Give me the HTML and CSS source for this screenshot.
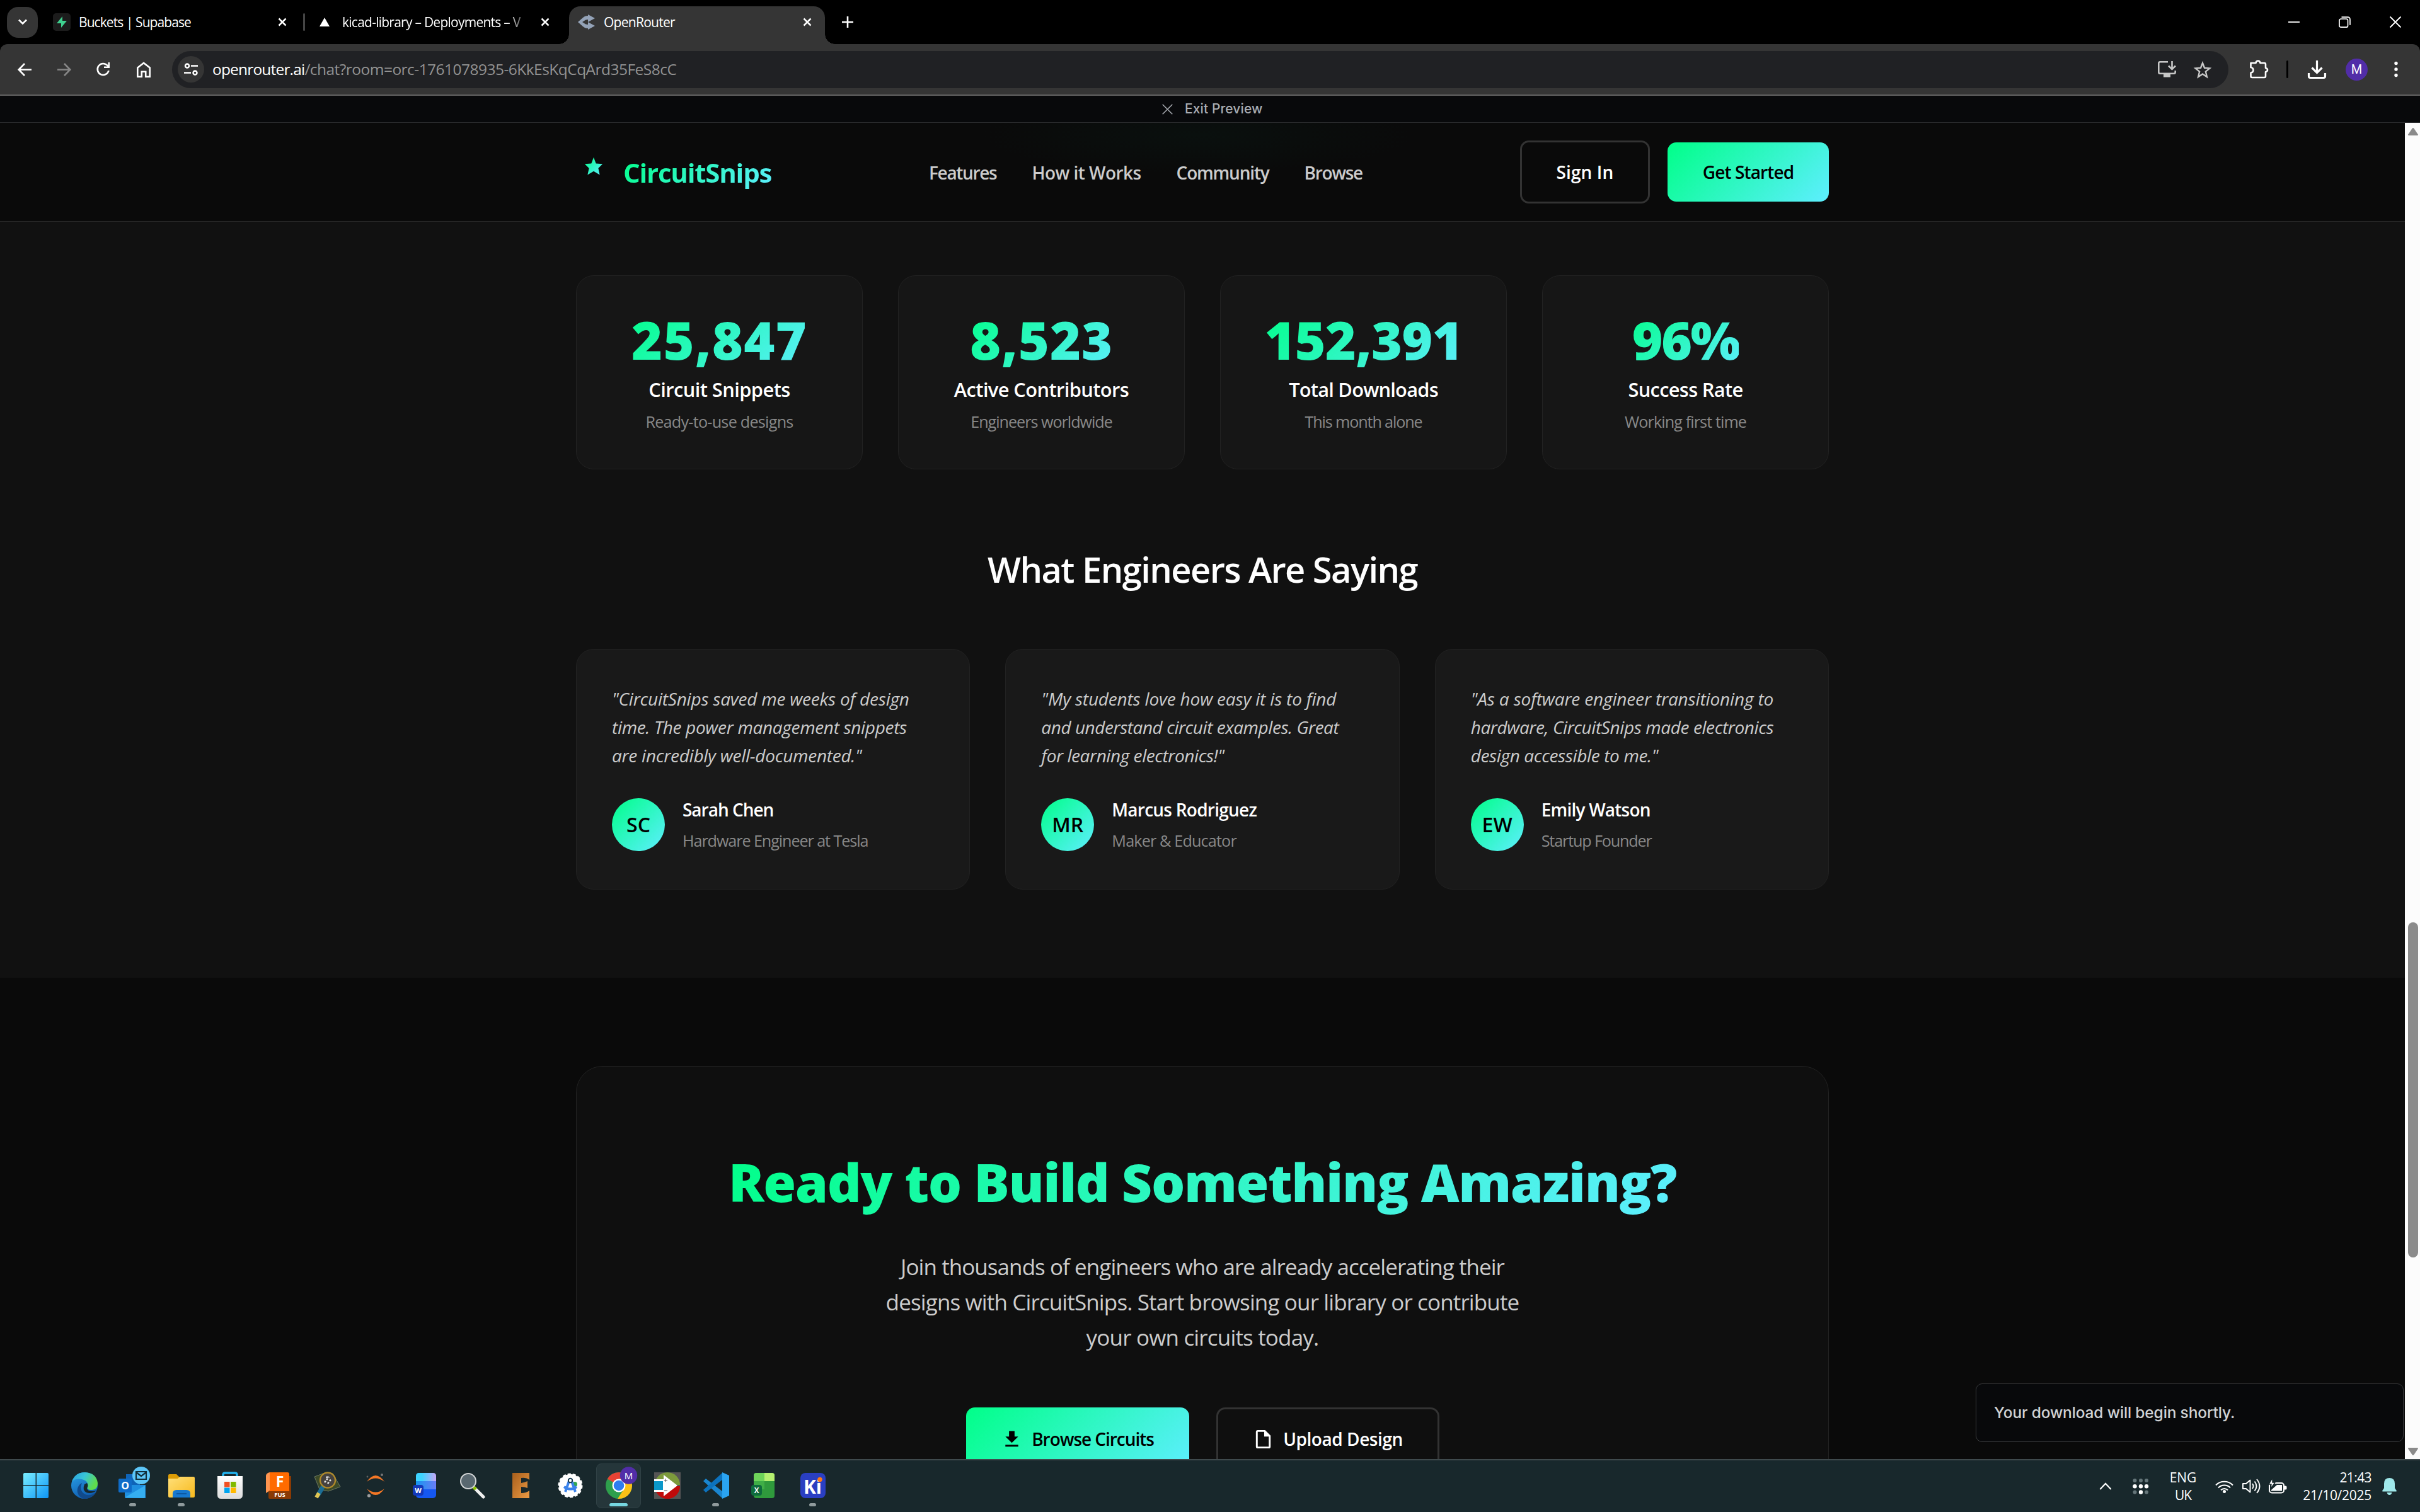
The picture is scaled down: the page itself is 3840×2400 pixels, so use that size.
FILE: index.html
```html
<!DOCTYPE html>
<html lang="en">
<head>
<meta charset="utf-8">
<title>OpenRouter</title>
<link rel="stylesheet" href="styles.css">
</head>
<body>
<svg width="0" height="0" class="defs" aria-hidden="true">
  <defs>
    <linearGradient id="brand" x1="0" y1="0" x2="1" y2="1"><stop offset="0" stop-color="#00ff88"/><stop offset="1" stop-color="#5eeeff"/></linearGradient>
    <linearGradient id="win" gradientUnits="userSpaceOnUse" x1="0" y1="0" x2="42" y2="42"><stop offset="0" stop-color="#7cf0ff"/><stop offset="1" stop-color="#0b93f6"/></linearGradient>
    <linearGradient id="edgeA" x1="0" y1="0" x2="1" y2="0.4"><stop offset="0" stop-color="#2a9fe0"/><stop offset=".5" stop-color="#38c5d8"/><stop offset="1" stop-color="#5fdc4d"/></linearGradient>
    <linearGradient id="edgeB" x1="0" y1="0" x2="0.5" y2="1"><stop offset="0" stop-color="#2aa3e8"/><stop offset="1" stop-color="#0f5cb0"/></linearGradient>
    <linearGradient id="folder" x1="0" y1="0" x2="1" y2="1"><stop offset="0" stop-color="#ffe07a"/><stop offset="1" stop-color="#f8b91c"/></linearGradient>
    <linearGradient id="wordA" x1="0" y1="0" x2="1" y2="0"><stop offset=".3" stop-color="#3dd4ff"/><stop offset="1" stop-color="#c6a5f5"/></linearGradient>
    <linearGradient id="wordB" x1="0" y1="0" x2="1" y2="0"><stop offset="0" stop-color="#1696f0"/><stop offset="1" stop-color="#6a7df5"/></linearGradient>
    <linearGradient id="bronze" x1="0" y1="0" x2="1" y2="1"><stop offset="0" stop-color="#a85f1c"/><stop offset="1" stop-color="#eb9a44"/></linearGradient>
    <linearGradient id="bag" x1="0" y1="0" x2="0" y2="1"><stop offset="0" stop-color="#ffffff"/><stop offset="1" stop-color="#dcdcdc"/></linearGradient>
  </defs>
</svg>

<header class="tabstrip">
  <div class="tab-search"><svg width="16" height="10" viewBox="0 0 16 10"><path d="M2 1.5l6 6 6-6" fill="none" stroke="#fff" stroke-width="2.6"/></svg></div>
  <div class="tab tab-one">
    <span class="fav-supabase"><svg width="20" height="20" viewBox="0 0 20 20"><path d="M11 1L2 12h7v7l9-11h-7z" fill="#3ecf8e"/></svg></span>
    <span class="tab-title t-supabase">Buckets | Supabase</span>
    <svg class="close" width="14" height="14" viewBox="0 0 14 14"><path d="M1.5 1.5l11 11M12.500 1.500l-11 11" stroke="#fff" stroke-width="2.5"/></svg>
  </div>
  <div class="tab-sep"></div>
  <div class="tab tab-two">
    <svg class="fav" width="16" height="14" viewBox="0 0 16 14"><path d="M8 0l8 14H0z" fill="#fff"/></svg>
    <span class="tab-title t-vercel">kicad-library – Deployments – V</span>
    <svg class="close" width="14" height="14" viewBox="0 0 14 14"><path d="M1.5 1.5l11 11M12.500 1.500l-11 11" stroke="#fff" stroke-width="2.5"/></svg>
  </div>
  <div class="tab tab-active">
    <svg class="fav" width="28" height="24" viewBox="0 0 28 24"><path d="M0 12L8 5q3-3 8-3V0l11 6-11 6V8q-4 0-6 2l-3 2 3 2q2 2 6 2v-4l11 6-11 6v-2q-5 0-8-3z" fill="#94a3b8"/></svg>
    <span class="tab-title t-router">OpenRouter</span>
    <svg class="close" width="14" height="14" viewBox="0 0 14 14"><path d="M1.5 1.5l11 11M12.500 1.500l-11 11" stroke="#fff" stroke-width="2.5"/></svg>
  </div>
  <svg class="new-tab" width="18" height="18" viewBox="0 0 18 18"><path d="M9 0v18M0 9h18" stroke="#fff" stroke-width="2.6"/></svg>
  <div class="window-controls">
    <svg width="18" height="18" viewBox="0 0 18 18"><path d="M0 9h18" stroke="#fff" stroke-width="1.8"/></svg>
    <svg width="19" height="18" viewBox="0 0 19 18"><rect x="1" y="4" width="13.500" height="13.200" rx="2.500" fill="none" stroke="#fff" stroke-width="1.700"/><path d="M4.500 1.200h9.500q4 0 4 4v8.500" fill="none" stroke="#fff" stroke-width="1.700"/></svg>
    <svg width="18" height="18" viewBox="0 0 18 18"><path d="M.5.5l17 17M17.500.5l-17 17" stroke="#fff" stroke-width="1.800"/></svg>
  </div>
</header>

<div class="toolbar-wrap">
  <div class="toolbar">
    <svg class="ic-back" width="22" height="21" viewBox="0 0 22 21"><path d="M22 10.500H2M11 1L1.700 10.500 11 20" fill="none" stroke="#fff" stroke-width="2.600"/></svg>
    <svg class="ic-forward" width="22" height="21" viewBox="0 0 22 21"><path d="M0 10.500h20M11 1l9.300 9.500L11 20" fill="none" stroke="#868686" stroke-width="2.600"/></svg>
    <svg class="ic-reload" width="22" height="22" viewBox="0 0 22 22"><path d="M19.500 13A9 9 0 1 1 17.500 5l2 2.500" fill="none" stroke="#fff" stroke-width="2.600"/><path d="M21 0v9h-9V6.500h6.500V0z" fill="#fff"/></svg>
    <svg class="ic-home" width="22" height="25" viewBox="0 0 22 25"><path d="M1.300 9.500L11 2l9.700 7.500v14.200h-6.500v-8H7.800v8H1.300z" fill="none" stroke="#fff" stroke-width="2.600"/></svg>
    <div class="omnibox">
      <span class="site-info"><svg width="22" height="20" viewBox="0 0 22 20"><g fill="none" stroke="#fff" stroke-width="2.500"><circle cx="5" cy="4.500" r="3"/><path d="M11 4.500h11M0 15.500h11"/><circle cx="17.500" cy="15.500" r="3"/></g></svg></span>
      <span class="url"><span class="host">openrouter.ai</span><span class="path">/chat?room=orc-1761078935-6KkEsKqCqArd35FeS8cC</span></span>
      <svg class="ic-install" width="29" height="26" viewBox="0 0 29 26"><path d="M16 1.300H3.500q-2.200 0-2.200 2.200v14q0 2.200 2.200 2.200h22q2.200 0 2.200-2.200V15" fill="none" stroke="#c7c7c7" stroke-width="2.600"/><path d="M9 20h11v5.500H9z" fill="#c7c7c7"/><path d="M22.500 0v12M17 7.500l5.500 5.500L28 7.500" fill="none" stroke="#c7c7c7" stroke-width="2.600"/></svg>
      <svg class="ic-star" width="28" height="27" viewBox="0 0 28 27"><path d="M14 3l3 7.800 8.300.6-6.400 5.300 2 8.300-6.900-4.500L7.100 25l2-8.300-6.400-5.300 8.300-.6z" fill="none" stroke="#c7c7c7" stroke-width="2.400"/></svg>
    </div>
    <svg class="ic-puzzle" width="29" height="30" viewBox="0 0 29 30"><path d="M1.500 5h8q.5-3.500 3.500-3.500T16.500 5H23q2 0 2 2v6q3 .5 3 3t-3 3v7q0 2-2 2H3.500q-2 0-2-2v-5.500q4-.5 4-4.200t-4-4.300z" fill="none" stroke="#fff" stroke-width="2.600" stroke-linejoin="round"/></svg>
    <span class="bar-sep"></span>
    <svg class="ic-download" width="29" height="29" viewBox="0 0 29 29"><path d="M14.500 0v19M6.500 11.500l8 8 8-8M1.500 20v5q0 2.500 2.500 2.500h21q2.500 0 2.500-2.500v-5" fill="none" stroke="#fff" stroke-width="3.200"/></svg>
    <span class="profile">M</span>
    <svg class="ic-more" width="6" height="26" viewBox="0 0 6 26"><g fill="#fff"><circle cx="3" cy="3.500" r="2.700"/><circle cx="3" cy="13" r="2.700"/><circle cx="3" cy="22.500" r="2.700"/></g></svg>
  </div>
</div>

<div class="preview-bar">
  <svg width="17" height="17" viewBox="0 0 17 17"><path d="M.7.7l15.600 15.600M16.300.7L.7 16.300" stroke="#a9adb3" stroke-width="1.500"/></svg>
  <span class="t-exit">Exit Preview</span>
</div>

<div class="viewport">
  <main class="page">
    <nav class="nav">
      <div class="logo">
        <svg width="34" height="34" viewBox="0 0 24 24"><path fill="url(#brand)" d="M12 2l2.600 6.800L22 9.270l-4.800 4.800L18.800 21.500 12 17.500l-6.800 4 1.600-7.430L2 9.270l7.400-.47z"/></svg>
        <span class="logo-text t-logo">CircuitSnips</span>
      </div>
      <div class="links">
        <a class="t-features">Features</a><a class="t-how">How it Works</a><a class="t-community">Community</a><a class="t-browse">Browse</a>
      </div>
      <div class="nav-actions">
        <a class="btn btn-outline sign-in"><span class="t-signin">Sign In</span></a>
        <a class="btn btn-primary get-started"><span class="t-start">Get Started</span></a>
      </div>
    </nav>

    <section class="community">
      <div class="stats">
        <article class="stat"><div class="num"><span class="t-n1">25,847</span></div><div class="label"><span class="t-l1">Circuit Snippets</span></div><div class="sub"><span class="t-s1">Ready-to-use designs</span></div></article>
        <article class="stat"><div class="num"><span class="t-n2">8,523</span></div><div class="label"><span class="t-l2">Active Contributors</span></div><div class="sub"><span class="t-s2">Engineers worldwide</span></div></article>
        <article class="stat"><div class="num"><span class="t-n3">152,391</span></div><div class="label"><span class="t-l3">Total Downloads</span></div><div class="sub"><span class="t-s3">This month alone</span></div></article>
        <article class="stat"><div class="num"><span class="t-n4">96%</span></div><div class="label"><span class="t-l4">Success Rate</span></div><div class="sub"><span class="t-s4">Working first time</span></div></article>
      </div>
      <h2 class="heading"><span class="t-heading">What Engineers Are Saying</span></h2>
      <div class="quotes">
        <article class="quote">
          <p class="words"><span class="t-q1">"CircuitSnips saved me weeks of design</span><br><span class="t-q2">time. The power management snippets</span><br><span class="t-q3">are incredibly well-documented."</span></p>
          <div class="author"><span class="avatar"><span class="t-sc">SC</span></span><div><div class="name"><span class="t-name1">Sarah Chen</span></div><div class="role"><span class="t-role1">Hardware Engineer at Tesla</span></div></div></div>
        </article>
        <article class="quote">
          <p class="words"><span class="t-q4">"My students love how easy it is to find</span><br><span class="t-q5">and understand circuit examples. Great</span><br><span class="t-q6">for learning electronics!"</span></p>
          <div class="author"><span class="avatar"><span class="t-mr">MR</span></span><div><div class="name"><span class="t-name2">Marcus Rodriguez</span></div><div class="role"><span class="t-role2">Maker &amp; Educator</span></div></div></div>
        </article>
        <article class="quote">
          <p class="words"><span class="t-q7">"As a software engineer transitioning to</span><br><span class="t-q8">hardware, CircuitSnips made electronics</span><br><span class="t-q9">design accessible to me."</span></p>
          <div class="author"><span class="avatar"><span class="t-ew">EW</span></span><div><div class="name"><span class="t-name3">Emily Watson</span></div><div class="role"><span class="t-role3">Startup Founder</span></div></div></div>
        </article>
      </div>
    </section>

    <section class="cta">
      <div class="cta-card">
        <h2 class="cta-title"><span class="t-title">Ready to Build Something Amazing?</span></h2>
        <p class="cta-text"><span class="t-p1">Join thousands of engineers who are already accelerating their</span><br><span class="t-p2">designs with CircuitSnips. Start browsing our library or contribute</span><br><span class="t-p3">your own circuits today.</span></p>
        <div class="cta-actions">
          <a class="btn btn-primary big"><svg width="35" height="35" viewBox="0 0 24 24"><path fill="#000" d="M19 9h-4V3H9v6H5l7 7 7-7zM5 18v2h14v-2H5z"/></svg><span class="t-bc">Browse Circuits</span></a>
          <a class="btn btn-outline big"><svg width="35" height="35" viewBox="0 0 24 24"><path fill="#fff" d="M14 2H6a2 2 0 0 0-2 2v16a2 2 0 0 0 2 2h12a2 2 0 0 0 2-2V8l-6-6m4 18H6V4h7v5h5v11z"/></svg><span class="t-ud">Upload Design</span></a>
        </div>
      </div>
    </section>
    <div class="toast"><span class="t-toast">Your download will begin shortly.</span></div>
  </main>
  <div class="scrollbar">
    <svg width="16" height="12" viewBox="0 0 16 12"><path d="M1 12q-1.500-.3-.7-1.800L6.500 1Q8-.8 9.500 1l6.200 9.200q.8 1.500-.7 1.800z" fill="#8b8b8b"/></svg>
    <div class="thumb"></div>
    <svg class="down" width="16" height="12" viewBox="0 0 16 12"><path d="M1 0q-1.500.3-.7 1.800L6.500 11q1.500 1.800 3 0l6.200-9.200Q16.500.3 15 0z" fill="#8b8b8b"/></svg>
  </div>
</div>

<footer class="taskbar">
  <div class="apps">
    <span class="app"><svg viewBox="0 0 42 42"><g fill="url(#win)"><path d="M3 1h17.500v19.500H1V3q0-2 2-2zM22 1h17q2 0 2 2v17.500H22zM1 22h19.500v19H3q-2 0-2-2zM22 22h19v17q0 2-2 2H22z"/></g></svg></span>
    <span class="app"><svg viewBox="0 0 42 42"><circle cx="21" cy="21" r="21" fill="url(#edgeB)"/><path d="M1 15Q6 0 22 0q18 1 20 17 0 11-10 11-8 0-6-5 2-8-6-11Q8 8 1 15z" fill="url(#edgeA)"/><path d="M17 17q-5 12 5 18 9 4 18-4-7 12-20 11Q8 37 10 26q2-7 7-9z" fill="#114a8b"/><path d="M25 17q3 4 0 8 0 5 9 5 4 0 6-1-8 6-16 3-7-4-3-13z" fill="#18282c"/></svg></span>
    <span class="app running"><svg viewBox="0 0 42 42"><path d="M10 3h22v20H10z" fill="#0f64b8"/><path d="M8 20h33v21H10q-2 0-2-2z" fill="#1f8fe0"/><path d="M8 40l32-19v18q0 2-2 2z" fill="#35aef0"/><rect x="-2" y="10" width="21" height="22" rx="2" fill="#0f6cc8"/><text x="8.500" y="27" class="glyph" font-size="16">O</text><circle cx="34" cy="5" r="14" fill="#5cc6f8"/><path d="M26-1h16v12H26zM26 0l8 6 8-6" fill="none" stroke="#12303c" stroke-width="2.200"/></svg></span>
    <span class="app running"><svg viewBox="0 0 42 42"><path d="M0 5q0-2 2-2h11l4 4v7H0z" fill="#dd9c05"/><path d="M0 10h15l3-3h22q2 0 2 2v29q0 2-2 2H2q-2 0-2-2z" fill="url(#folder)"/><path d="M7 40V34q0-6 6-6h16q6 0 6 6v6z" fill="#1778cf"/><path d="M13 34h16" stroke="#0d58a2" stroke-width="2"/></svg></span>
    <span class="app"><svg viewBox="0 0 42 42"><path d="M10 8V4q0-3 3-3h16q3 0 3 3v4" fill="none" stroke="#22b4f0" stroke-width="3.500"/><path d="M1 6h40v30q0 6-6 6H7q-6 0-6-6z" fill="url(#bag)"/><path d="M12 15h8.500v8.500H12z" fill="#f25022"/><path d="M22 15h8.500v8.500H22z" fill="#7fba00"/><path d="M12 24.500h8.500V33H12z" fill="#00a4ef"/><path d="M22 24.500h8.500V33H22z" fill="#ffb900"/></svg></span>
    <span class="app"><svg viewBox="0 0 42 42"><path d="M5 6h36v36H7q-2 0-2-2z" fill="#8a3a04"/><path d="M7 0h28q3 0 3 3v27H7z" fill="#ff6b00"/><path d="M7 0v29l-6 4V5q0-2 3-4z" fill="#ff9550"/><text x="23" y="23" class="glyph" font-size="23">F</text><text x="23" y="38.500" class="glyph" font-size="9.500">FUS</text></svg></span>
    <span class="app"><svg viewBox="0 0 42 42"><path d="M1 7L14 2l16 0 12 21-19 7-14-3z" fill="#3c4a28" stroke="#9aa58a" stroke-width=".6"/><path d="M15 22L6 37" stroke="#1a6d96" stroke-width="7"/><path d="M8 33L4 40" stroke="#e0c552" stroke-width="6"/><circle cx="22" cy="12.500" r="12" fill="#45423f" stroke="#b08a2a" stroke-width="2.400"/><path d="M20 9l3-4M17 16l7-9M22 18l6-8" stroke="#e6e6e6" stroke-width="2.600" stroke-dasharray="3 2"/></svg></span>
    <span class="app"><svg viewBox="0 0 42 42"><path d="M7 15Q21-5 35 15 21 4 7 15zM7 26q14 20 28 0-14 11-28 0z" fill="#f37726"/><circle cx="31" cy="4" r="2" fill="#767677"/><circle cx="8" cy="7" r="1.400" fill="#616262"/><circle cx="10.500" cy="37" r="2.600" fill="#9e9e9e"/></svg></span>
    <span class="app"><svg viewBox="0 0 42 42"><rect x="8" y="1" width="32" height="40" rx="5" fill="#1557f0"/><path d="M8 14h32v13H8z" fill="url(#wordB)"/><path d="M13 1h22q5 0 5 5v8H8V6q0-5 5-5z" fill="url(#wordA)"/><rect x="3" y="20" width="17" height="17" rx="4" fill="#1438b8"/><text x="11.500" y="32.500" class="glyph" font-size="11">W</text></svg></span>
    <span class="app"><svg viewBox="0 0 42 42"><path d="M24 25l14 14" stroke="#efefef" stroke-width="5" stroke-linecap="round"/><path d="M22 23l4 4" stroke="#8cc400" stroke-width="5"/><circle cx="14" cy="14" r="12" fill="#596870" stroke="#d2d5d6" stroke-width="2"/></svg></span>
    <span class="app"><svg viewBox="0 0 42 42"><path d="M7 1h27v11q-5-4-13-3v8q6-1 10-3v11q-4-2-10-2v10q8 0 13-4v12H7z" fill="url(#bronze)"/></svg></span>
    <span class="app"><svg viewBox="0 0 42 42"><circle cx="21" cy="21" r="18" fill="#fff" stroke="#fff" stroke-width="3" stroke-dasharray="5 3"/><circle cx="28" cy="19" r="4" fill="#32a852"/><path d="M20 11l-7 20M22 11l7 20M11 23q10 7 20 0" fill="none" stroke="#3b82ea" stroke-width="4"/><circle cx="21" cy="13" r="3.200" fill="#fff" stroke="#173b50" stroke-width="2"/></svg></span>
    <span class="app selected"><svg viewBox="0 0 42 42"><circle cx="21" cy="21" r="21" fill="#2e9f4c"/><path d="M21 21L2.800 10.500A21 21 0 0 1 39.200 10.500z" fill="#ea4335"/><path d="M39.200 10.500A21 21 0 0 1 19 42L30 25l-9-14.500z" fill="#fbc116"/><circle cx="21" cy="21" r="10.500" fill="#fff"/><circle cx="21" cy="21" r="8.300" fill="#2f7df0"/><circle cx="36.500" cy="5" r="13.700" fill="#512da8"/><text x="36.500" y="10.500" class="glyph soft" font-size="15">M</text></svg></span>
    <span class="app"><svg viewBox="0 0 42 42"><path d="M0 0h42v42H0z" fill="#555"/><path d="M1 20a20 20 0 0 1 40 0z" fill="#7c9a3c"/><path d="M1 22a20 20 0 0 0 40 0z" fill="#c00a0a"/><path d="M0 11h16v20H0z" fill="#fff"/><path d="M0 14h14v14H0z" fill="#0b97c9"/><path d="M15 4l22 17-22 17z" fill="#fff"/><path d="M16 12.500h5M18.500 10v5M16 29h5" stroke="#555" stroke-width="1"/></svg></span>
    <span class="app running"><svg viewBox="0 0 42 42"><path d="M1 14l4-4 26 20v11z" fill="#1a86d0"/><path d="M1 28l4 4 26-20V1z" fill="#0c72bd"/><path d="M31 0l11 5v32l-11 5z" fill="#2aa4f2"/></svg></span>
    <span class="app"><svg viewBox="0 0 42 42"><rect x="4" y="1" width="33" height="40" rx="4" fill="#2f9a3c"/><path d="M8 1h13v13H4V5q0-4 4-4z" fill="#6ed45a"/><path d="M21 1h12q4 0 4 4v9H21z" fill="#b5f070"/><path d="M4 14h17v13H4z" fill="#3fae46"/><rect x="0" y="20" width="17" height="17" rx="4" fill="#0f6b3d"/><text x="8.500" y="32.500" class="glyph" font-size="11.500">X</text></svg></span>
    <span class="app running"><svg viewBox="0 0 42 42"><rect x="1" y="1" width="40" height="40" rx="8" fill="#2a3fc2"/><text x="20.500" y="34" class="glyph" font-size="31" textLength="29" lengthAdjust="spacingAndGlyphs">Ki</text><circle cx="32" cy="11.500" r="3.700" fill="#ff7a14"/></svg></span>
  </div>
  <div class="tray">
    <svg width="20" height="12" viewBox="0 0 20 12"><path d="M1.300 11L10 1.800 18.700 11" fill="none" stroke="#fff" stroke-width="2.200"/></svg>
    <svg class="tray-dots" width="26" height="25" viewBox="0 0 26 25"><g fill="#65767a"><circle cx="3.500" cy="3" r="3"/><circle cx="13" cy="3" r="3"/><circle cx="22" cy="3" r="3"/><circle cx="3.500" cy="21.500" r="3"/><circle cx="22" cy="21.500" r="3"/></g><g fill="#fff"><circle cx="3.500" cy="12.300" r="3.200"/><circle cx="13" cy="12.300" r="3.200"/><circle cx="22" cy="12.300" r="3.200"/><circle cx="13" cy="21.500" r="3.200"/></g></svg>
    <div class="lang"><span class="t-eng">ENG</span><br><span class="t-uk">UK</span></div>
    <svg class="wifi" width="29" height="21" viewBox="0 0 29 21"><g fill="none" stroke="#fff" stroke-width="2"><path d="M1 8.500a19 19 0 0 1 27 0M5 12.500a13.500 13.500 0 0 1 19 0M9 16.300a7.800 7.800 0 0 1 11 0"/></g><circle cx="14.500" cy="18.500" r="2.500" fill="#fff"/></svg>
    <svg class="speaker" width="29" height="24" viewBox="0 0 29 24"><g fill="none" stroke="#fff" stroke-width="1.900"><path d="M1 8h5l6.500-5.500v19L6 16H1z" stroke-linejoin="round"/><path d="M16 8q3 4 0 8M19.500 4.500q6 7.500 0 15M23 1q9 11 0 22"/></g></svg>
    <svg class="battery" width="29" height="24" viewBox="0 0 29 24"><rect x="1" y="7" width="23" height="15.500" rx="4" fill="none" stroke="#fff" stroke-width="2"/><path d="M4 18l9-8h8v9.500H4zM25 11.500h1.500q2 0 2 1.500v3q0 1.500-2 1.500H25z" fill="#fff"/><path d="M6-1L0 9h4l-1 7 7-10H6z" fill="#fff" stroke="#18282c" stroke-width="1.400"/></svg>
    <div class="clock"><span class="t-time">21:43</span><br><span class="t-date">21/10/2025</span></div>
    <svg class="bell" width="23" height="27" viewBox="0 0 23 27"><path d="M11.500 0q8.500 0 8.500 9v7l3 4.500q0 1-1 1H1q-1 0-1-1L3 16V9q0-9 8.500-9zM7.500 23h8q-1 4-4 4t-4-4z" fill="#9fe8ea"/></svg>
  </div>
</footer>
</body>
</html>
```
FILE: styles.css
```css
* { box-sizing: border-box; }
html, body { margin: 0; height: 100%; }
body {
  width: 3840px; height: 2400px; overflow: hidden;
  display: flex; flex-direction: column;
  background: #000; color: #fff;
  font-family: "Open Sans", "Noto Sans", sans-serif;
}
svg { display: block; flex: none; overflow: visible; }
.defs { position: absolute; }
span[class^="t-"], a[class^="t-"], .tab-title { white-space: pre; }

/* Tab strip */
.tabstrip { height: 70px; flex: none; display: flex; align-items: center; background: #000; }
.tab-search { width: 49px; height: 49px; margin-left: 11px; border-radius: 18px; background: #353535; display: flex; align-items: center; justify-content: center; }
.tab { display: flex; align-items: center; height: 60px; font-size: 21px; line-height: 28px; }
.tab-one { margin-left: 24px; width: 371px; }
.fav-supabase { width: 28px; height: 28px; border-radius: 5px; background: #1c1c1c; display: flex; align-items: center; justify-content: center; margin-right: 13px; }
.tab-title { flex: 1; }
.close { flex: none; }
.tab-sep { width: 3px; height: 28px; margin-left: 26px; border-radius: 2px; background: #454545; }
.tab-two { margin-left: 23px; width: 365px; }
.tab-two .fav { margin-right: 20px; }
.tab-two .tab-title { flex: none; width: 295px; margin-right: 20px; letter-spacing: -0.75px; -webkit-mask-image: linear-gradient(90deg, #000 262px, transparent 297px); mask-image: linear-gradient(90deg, #000 262px, transparent 297px); }
.tab-active { position: relative; align-self: flex-end; margin-left: 31px; width: 406px; height: 60px; padding: 0 21px 10px 14px; border-radius: 18px 18px 0 0; background: #353535; }
.tab-active .fav { margin-right: 13px; }
.tab-active::before, .tab-active::after { content: ""; position: absolute; bottom: 0; width: 16px; height: 16px; }
.tab-active::before { left: -16px; background: radial-gradient(circle at 0 0, transparent 15.5px, #353535 16px); }
.tab-active::after { right: -16px; background: radial-gradient(circle at 100% 0, transparent 15.5px, #353535 16px); }
.new-tab { margin-left: 27px; }
.window-controls { margin-left: auto; margin-right: 30px; display: flex; gap: 62px; }
.t-supabase { letter-spacing: -0.92px; }
.t-router { letter-spacing: -0.73px; }

/* Toolbar */
.toolbar-wrap { flex: none; height: 82px; background: #000; }
.toolbar { height: 82px; display: flex; align-items: center; background: #353535; border-bottom: 2px solid #626262; border-radius: 12px 12px 0 0; padding-left: 28px; }
.ic-forward { margin-left: 41px; }
.ic-reload { margin-left: 40px; }
.ic-home { margin-left: 42px; }
.omnibox { width: 3263px; height: 59px; margin-left: 34px; padding: 0 27px 0 9px; border-radius: 30px; background: #202124; display: flex; align-items: center; }
.site-info { width: 42px; height: 42px; border-radius: 50%; background: #353535; display: flex; align-items: center; justify-content: center; }
.url { margin-left: 13px; font-size: 24.5px; white-space: pre; line-height: 34px; }
.host { letter-spacing: -0.82px; }
.path { color: #929292; letter-spacing: -0.53px; }
.ic-install { margin-left: auto; }
.ic-star { margin-left: 28px; }
.ic-puzzle { margin-left: 34px; }
.bar-sep { width: 3px; height: 28px; margin-left: 29px; border-radius: 2px; background: #000; }
.ic-download { margin-left: 31px; }
.profile { width: 35px; height: 35px; margin-left: 31px; border-radius: 50%; background: #512da8; font: 20px/35px Roboto, sans-serif; text-align: center; }
.ic-more { margin-left: 42px; }

/* Preview bar */
.preview-bar { flex: none; height: 43px; display: flex; align-items: center; padding: 0 0 0 1844px; gap: 19px; background: #08090b; border-bottom: 1px solid #2a2b2d; color: #a9adb3; font: 500 21px/28px Inter, sans-serif; }
.t-exit { letter-spacing: 0.1px; }

/* Viewport */
.viewport { flex: 1; min-height: 0; display: flex; position: relative; overflow: hidden; }
.page { width: 3816px; height: 100%; overflow: hidden; background: #0a0a0a; }
.scrollbar { width: 24px; background: #fcfcfc; display: flex; flex-direction: column; align-items: center; padding: 8px 0 6px 2px; }
.thumb { width: 16px; height: 532px; margin-top: 1249px; border-radius: 8px; background: #8b8b8b; }
.down { margin-top: auto; }

/* Site navigation */
.nav { height: 157px; padding: 0 914px; display: flex; align-items: center; background: radial-gradient(ellipse 340px 60px at 1900px 20px, #0a100e, transparent), #0a0a0a; border-bottom: 1px solid #272727; }
.logo { width: 560px; padding-left: 11px; display: flex; align-items: center; }
.logo svg { margin: 0 30px 18px 0; }
.logo-text { font-size: 42px; line-height: 60px; font-weight: 700; letter-spacing: -1.23px; padding-top: 1px; }
.logo-text, .num span, .t-title { background: linear-gradient(135deg, #00ff88, #5eeeff); -webkit-background-clip: text; background-clip: text; color: transparent; }
.links { display: flex; gap: 56px; padding-top: 1px; color: #ccc; font-size: 28px; font-weight: 600; line-height: 42px; }
.t-features { letter-spacing: -1.33px; }
.t-how { letter-spacing: -0.54px; }
.t-community { letter-spacing: -1.19px; }
.t-browse { letter-spacing: -1.36px; }
.nav-actions { margin-left: auto; display: flex; gap: 28px; align-items: center; }
.btn { display: flex; align-items: center; justify-content: center; border-radius: 14px; font-size: 28px; font-weight: 600; line-height: 42px; }
.btn-outline { border: 3px solid #333; color: #fff; }
.btn-primary { background: linear-gradient(135deg, #00ff88, #5eeeff); color: #000; }
.sign-in { width: 206px; height: 100px; }
.get-started { width: 256px; height: 94px; }
.t-signin { letter-spacing: 0.1px; }
.t-start { letter-spacing: -0.9px; }

/* Community */
.community { padding: 85px 914px 140px; background: #111; }
.stats { display: grid; grid-template-columns: repeat(4, 1fr); gap: 56px; }
.stat { height: 308px; padding-top: 59px; border: 1px solid #222; border-radius: 28px; background: #161616; text-align: center; }
.num { height: 84px; font-size: 84px; line-height: 84px; font-weight: 800; }
.label { margin-top: 13px; font-size: 30.8px; line-height: 49px; font-weight: 600; }
.sub { margin-top: 6px; font-size: 25.2px; line-height: 40px; color: #888; }
.t-n1 { letter-spacing: 1.13px; }
.t-n2 { letter-spacing: 0.85px; }
.t-n3 { letter-spacing: -1.01px; }
.t-n4 { letter-spacing: -2.72px; }
.t-l1 { letter-spacing: -0.56px; }
.t-l2 { letter-spacing: -0.59px; }
.t-l3 { letter-spacing: -0.77px; }
.t-l4 { letter-spacing: -0.68px; }
.t-s1 { letter-spacing: -0.75px; }
.t-s2 { letter-spacing: -1.03px; }
.t-s3 { letter-spacing: -1.14px; }
.t-s4 { letter-spacing: -0.9px; }
.heading { margin: 113px 0 82px; font-size: 56px; line-height: 90px; font-weight: 600; text-align: center; }
.t-heading { letter-spacing: -1.55px; }
.quotes { display: grid; grid-template-columns: repeat(3, 1fr); gap: 56px; }
.quote { height: 382px; padding: 56px; border: 1px solid #222; border-radius: 28px; background: #191919; }
.words { margin: 0; font-size: 28px; line-height: 44.8px; font-style: italic; color: #ccc; }
.author { margin-top: 42px; display: flex; align-items: center; gap: 28px; }
.avatar { width: 84px; height: 84px; border-radius: 50%; background: linear-gradient(135deg, #00ff88, #5eeeff); color: #000; font-size: 32px; font-weight: 600; display: flex; align-items: center; justify-content: center; }
.name { font-size: 28px; line-height: 45px; font-weight: 600; }
.role { margin-top: 6px; font-size: 25.2px; line-height: 40px; color: #888; }
.t-q1 { letter-spacing: -0.21px; }
.t-q2 { letter-spacing: -0.32px; }
.t-q3 { letter-spacing: -0.26px; }
.t-q4 { letter-spacing: -0.18px; }
.t-q5 { letter-spacing: -0.45px; }
.t-q6 { letter-spacing: -0.43px; }
.t-q7 { letter-spacing: -0.15px; }
.t-q8 { letter-spacing: -0.4px; }
.t-q9 { letter-spacing: -0.36px; }
.t-name1 { letter-spacing: -1.02px; }
.t-name2 { letter-spacing: -0.76px; }
.t-name3 { letter-spacing: -0.79px; }
.t-role1 { letter-spacing: -1.09px; }
.t-role2 { letter-spacing: -0.85px; }
.t-role3 { letter-spacing: -1.15px; }

/* Call to action */
.cta { padding: 140px 914px; background: #0a0a0a; }
.cta-card { height: 900px; padding-top: 116px; border: 1px solid #222; border-radius: 42px; background: #0f0f0f; text-align: center; }
.cta-title { margin: 0; font-size: 84px; line-height: 134px; font-weight: 800; }
.t-title { letter-spacing: -1.43px; }
.cta-text { margin: 40px 0 0; font-size: 35px; line-height: 56px; color: #ccc; }
.t-p1 { letter-spacing: -0.94px; }
.t-p2 { letter-spacing: -0.86px; }
.t-p3 { letter-spacing: -0.82px; }
.cta-actions { margin-top: 83px; display: flex; justify-content: center; gap: 43px; }
.big { height: 100px; width: 354px; gap: 14px; }
.t-bc { letter-spacing: -1.05px; }
.t-ud { letter-spacing: -0.45px; }

/* Toast */
.toast { position: absolute; left: 3135px; top: 2001px; width: 679px; height: 93px; padding-left: 28px; border: 1px solid #3a3b3d; border-radius: 10px; background: #08090b; color: #d0d2d4; font: 500 24.5px/91px Inter, sans-serif; }
.t-toast { letter-spacing: -0.15px; }

/* Taskbar */
.taskbar { flex: none; height: 84px; display: flex; justify-content: space-between; background: #18282c; border-top: 2px solid #3f4a4d; }
.apps { display: flex; padding-left: 18px; }
.app { width: 77.1px; display: flex; flex-direction: column; align-items: center; padding-top: 19px; }
.app svg { width: 42px; height: 42px; }
.running::after { content: ""; width: 11px; height: 5px; margin-top: 7px; border-radius: 3px; background: #8f9a9c; }
.selected { width: 71px; margin: 5px 3px; padding-top: 13px; height: 71px; border-radius: 8px; background: #25363a; border: 1px solid #304145; }
.selected::after { content: ""; width: 29px; height: 5px; margin-top: 7px; border-radius: 3px; background: #76d6e0; }
.glyph { font-family: "Open Sans", sans-serif; font-weight: 700; fill: #fff; text-anchor: middle; }
.soft { font-weight: 400; }
.tray { display: flex; align-items: center; padding-right: 37px; font-size: 21px; line-height: 28px; }
.tray-dots { margin-left: 33px; }
.lang { width: 60px; margin-left: 24px; text-align: center; }
.wifi { margin-left: 21px; }
.speaker { margin-left: 14px; }
.battery { margin-left: 13px; }
.clock { width: 134px; text-align: right; }
.bell { margin-left: 17px; }
.t-uk { letter-spacing: -1px; }
.t-time { letter-spacing: -0.6px; }
.t-date { letter-spacing: -0.27px; }
```
